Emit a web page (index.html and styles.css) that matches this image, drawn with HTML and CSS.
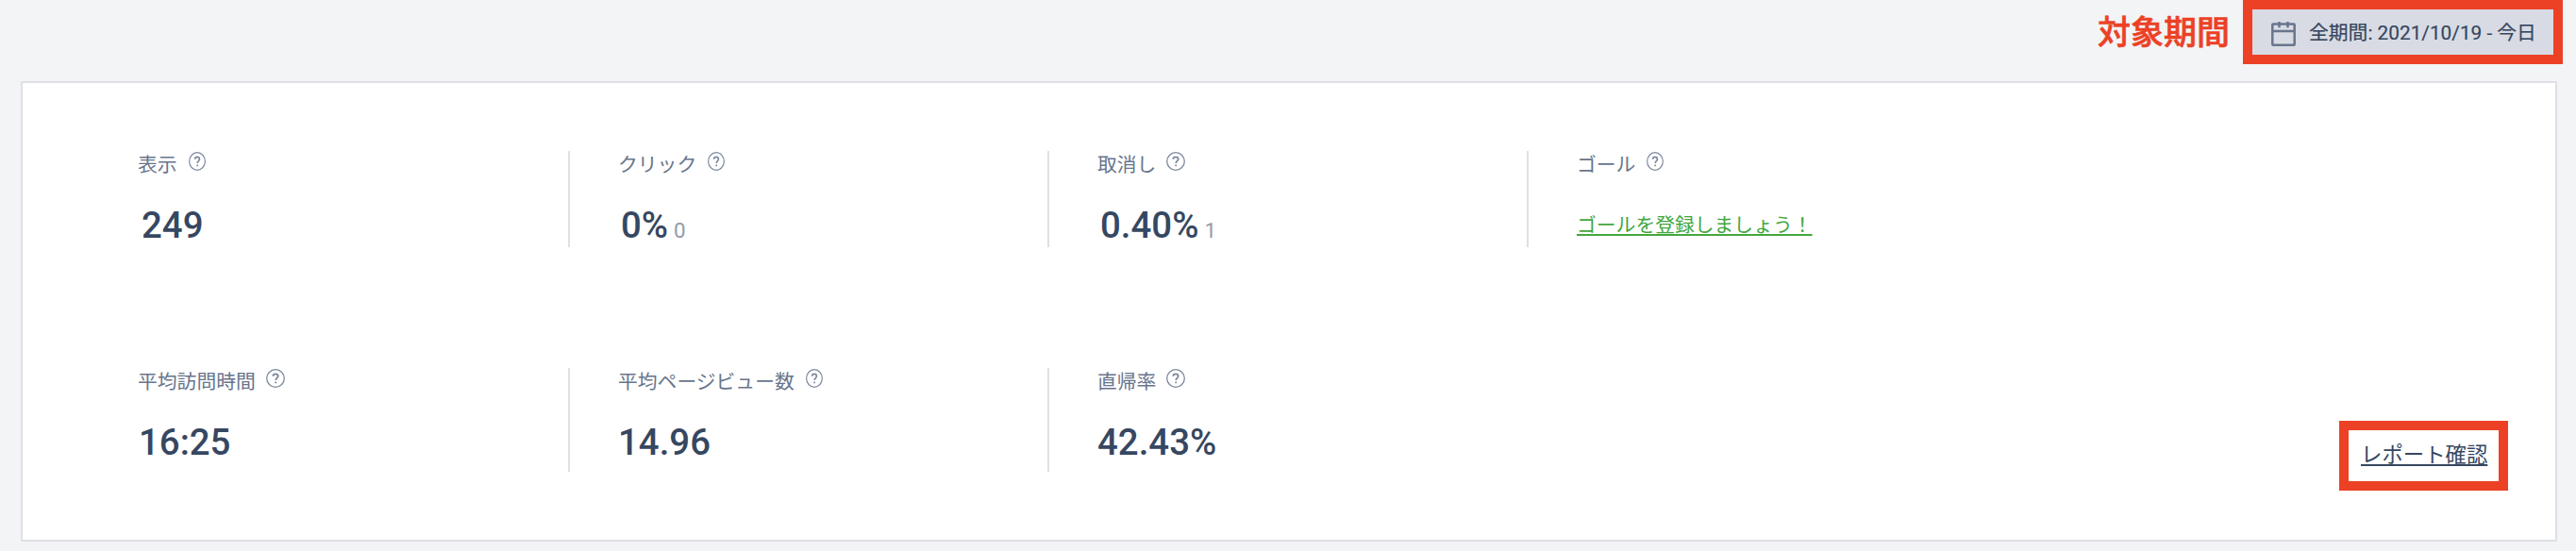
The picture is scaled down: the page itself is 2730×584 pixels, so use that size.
FILE: index.html
```html
<!DOCTYPE html>
<html lang="ja">
<head>
<meta charset="utf-8">
<title>レポート</title>
<link rel="stylesheet" href="styles.css">
</head>
<body>
<svg class="sprite" aria-hidden="true">
  <symbol id="help" viewBox="0 0 20 20" preserveAspectRatio="none">
    <circle cx="10" cy="10" r="9.3" fill="none" stroke="currentColor" stroke-width="1.3"/>
    <path d="M7.3 7.8C7.3 6.2 8.4 5.3 10 5.3s2.7 1 2.7 2.4c0 1.9-2.5 2-2.5 4.3M10.2 13.4v1.8" fill="none" stroke="currentColor" stroke-width="1.8"/>
  </symbol>
</svg>
<header class="toolbar">
  <span class="caption">対象期間</span>
  <button class="period">
    <svg class="calendar" viewBox="0 0 26 26" fill="none" stroke="currentColor" stroke-width="2.5">
      <rect x="1.3" y="2.6" width="23.4" height="22.1" rx="0.8"/>
      <path d="M1 10h24M8.5 0v6.3M17.5 0v6.3"/>
    </svg>
    <span class="period-text">全期間: 2021/10/19 - 今日</span>
  </button>
</header>
<main class="card">
  <section class="stats stats-main">
    <div class="stat">
      <div class="label">表示<svg class="help narrow"><use href="#help"/></svg></div>
      <div class="value">249</div>
    </div>
    <div class="stat">
      <div class="label">クリック<svg class="help narrow"><use href="#help"/></svg></div>
      <div class="value">0%<small class="count">0</small></div>
    </div>
    <div class="stat">
      <div class="label">取消し<svg class="help"><use href="#help"/></svg></div>
      <div class="value">0.40%<small class="count">1</small></div>
    </div>
    <div class="stat">
      <div class="label">ゴール<svg class="help narrow"><use href="#help"/></svg></div>
      <a class="goal">ゴールを登録しましょう！</a>
    </div>
  </section>
  <section class="stats stats-sub">
    <div class="stat">
      <div class="label">平均訪問時間<svg class="help"><use href="#help"/></svg></div>
      <div class="value">16:25</div>
    </div>
    <div class="stat">
      <div class="label">平均ページビュー数<svg class="help narrow"><use href="#help"/></svg></div>
      <div class="value">14.96</div>
    </div>
    <div class="stat last">
      <div class="label">直帰率<svg class="help"><use href="#help"/></svg></div>
      <div class="value">42.43%</div>
    </div>
    <div class="report"><a class="report-link">レポート確認</a></div>
  </section>
</main>
</body>
</html>
```
FILE: styles.css
```css
* { box-sizing: border-box; }
body {
  margin: 0;
  height: 584px;
  overflow: hidden;
  background: #f3f4f6;
  color: #364761;
  font-family: Roboto, "Noto Sans CJK JP", sans-serif;
}
.sprite { display: none; }
.toolbar {
  display: flex;
  justify-content: flex-end;
  height: 86px;
  padding-right: 14px;
}
.caption {
  margin-right: 14px;
  padding-top: 2px;
  color: #ec4125;
  font-size: 35px;
  font-weight: 500;
  line-height: 68px;
  -webkit-text-stroke: 0.6px #ec4125;
}
.period {
  display: flex;
  align-items: center;
  width: 339px;
  height: 68px;
  padding: 0 0 0 20px;
  border: 10px solid #ec4125;
  background: #d8dbe3;
  color: #364761;
  font: 400 20.8px/30px Roboto, "Noto Sans CJK JP", sans-serif;
  -webkit-text-stroke: 0.2px #364761;
}
.calendar {
  width: 26px;
  height: 26px;
  margin: 4px 14px 0 0;
  color: #68758c;
}
.period-text { padding-top: 1px; white-space: nowrap; }
.card {
  height: 488px;
  margin: 0 20px 0 22px;
  padding: 72px 0 0 72px;
  border: 2px solid #dfe0e5;
  background: #fff;
}
.stats { display: flex; }
.stats-main { height: 102px; }
.stats-sub { height: 110px; margin-top: 128px; }
.stat {
  width: 508px;
  padding-left: 51px;
  border-right: 2px solid #dfe0e5;
}
.stat:first-child .label { margin-left: -1px; }
.stats-main .stat { padding-left: 54px; }
.stats-main .label, .goal { margin-left: -3px; }
.stats-main .stat:first-child .label { margin-left: -4px; }
.stats-main .stat:last-child, .stat.last { border-right: 0; }
.label {
  display: flex;
  align-items: flex-start;
  height: 54px;
  color: #68758c;
  font-size: 20.8px;
  line-height: 30px;
}
.help {
  width: 20px;
  height: 20px;
  margin: 1px 0 0 11px;
  color: #7d899e;
}
.narrow { width: 18px; margin-left: 12px; }
.value {
  font-size: 38.4px;
  font-weight: 500;
  line-height: 50px;
}
.count {
  margin-left: 6px;
  color: #929baa;
  font-size: 22.4px;
  font-weight: 400;
}
.goal {
  display: inline-block;
  color: #43a73d;
  font-size: 20.8px;
  line-height: 50px;
  text-decoration: underline;
  text-decoration-thickness: 2px;
  text-underline-offset: 2px;
}
.report {
  width: 179px;
  height: 74px;
  margin: 56px 50px 0 auto;
  padding-left: 13px;
  border: 10px solid #ec4125;
}
.report-link {
  font-size: 22.4px;
  line-height: 52px;
  text-decoration: underline;
  text-decoration-thickness: 2px;
  text-underline-offset: 2px;
}
```
